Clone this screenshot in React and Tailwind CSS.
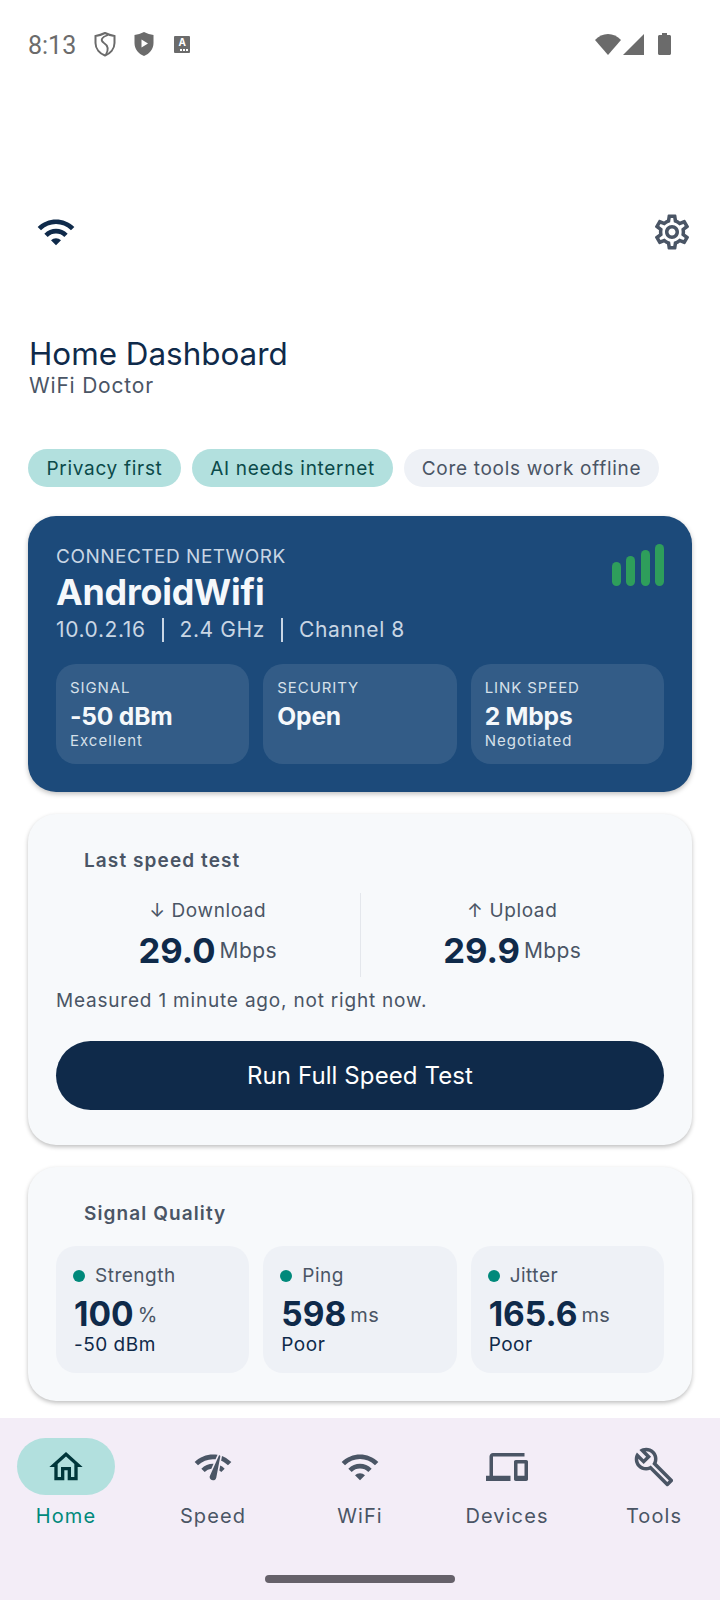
import React from "react";
import {
  MdOutlineHome,
  MdNetworkCheck,
  MdWifi,
  MdDevices,
  MdOutlineBuild,
  MdOutlineSettings,
} from "react-icons/md";

const font = { fontFamily: "Inter, sans-serif" };

const ShieldOutline = () => (
  <svg width="24" height="26" viewBox="0 0 24 26" fill="none" stroke="#6b6b6b" strokeWidth="2">
    <path d="M12 2 C15 3.5 18 4.5 21.5 5 V12 C21.5 18 17 22.5 12 24.5 C7 22.5 2.5 18 2.5 12 V5 C6 4.5 9 3.5 12 2 Z" />
    <path d="M15 4 C9 6 6.5 9 11 12 C15 14.5 16 18 13 23.5" strokeWidth="1.8" />
  </svg>
);

const ShieldPlay = () => (
  <svg width="24" height="26" viewBox="0 0 24 26">
    <path fill="#6b6b6b" d="M12 1 C15 2.5 18.5 3.5 21.5 4 V12 C21.5 18 17.5 23 12 25 C6.5 23 2.5 18 2.5 12 V4 C5.5 3.5 9 2.5 12 1 Z" />
    <path fill="#ffffff" d="M9.5 8.5 L16 12.5 L9.5 16.5 Z" />
  </svg>
);

const Tile = ({ label, value, note }) => (
  <div className="bg-white/10 rounded-[20px] h-[100px] pl-[14px] pt-[15px]">
    <p className="text-[15px] leading-[18px] tracking-[0.9px] text-[#d6e0ea]">{label}</p>
    <p className="text-[24.6px] leading-[34px] mt-[2px] font-bold text-[#f5f8fb] -tracking-[0.2px]">{value}</p>
    {note && <p className="text-[15px] leading-[16px] tracking-[1px] text-[#d6e0ea]">{note}</p>}
  </div>
);

const Quality = ({ label, value, unit, note }) => (
  <div className="bg-[#eef1f6] rounded-[20px] h-[127px] pl-[17px] pt-[18px]">
    <div className="flex items-center gap-[10px]">
      <span className="w-[12px] h-[12px] rounded-full bg-[#00897b]" />
      <span className="text-[19px] leading-[24px] text-[#4a5565] tracking-[0.5px]">{label}</span>
    </div>
    <div className="flex items-center gap-[4px] mt-[6px] pl-[1px]">
      <span className="text-[33.5px] leading-[40px] font-bold text-[#0f2a4a]">{value}</span>
      <span className="text-[20px] leading-[24px] mt-[2px] text-[#4a5565] tracking-[0.3px]">{unit}</span>
    </div>
    <p className="text-[19px] leading-[24px] -mt-[1px] text-[#0f2a4a] pl-[1px] tracking-[0.5px]">{note}</p>
  </div>
);

const Speed = ({ arrow, label, value }) => (
  <div className="flex-1 flex flex-col items-center">
    <p className="text-[19px] leading-[24px] text-[#4a5565] tracking-[0.6px] mt-[6px]">
      {arrow} {label}
    </p>
    <div className="flex items-center gap-[4px] mt-[5px]">
      <span className="text-[34.6px] leading-[44px] font-bold text-[#0f2a4a]">{value}</span>
      <span className="text-[21px] leading-[28px] mt-[2px] text-[#4a5565] tracking-[0.4px]">Mbps</span>
    </div>
  </div>
);

const NavItem = ({ icon: Icon, label, active, size = 40 }) => (
  <div className="w-[147px] shrink-0 flex flex-col items-center">
    <div className={`w-[98px] h-[57px] rounded-full flex items-center justify-center ${active ? "bg-[#b2e0de]" : ""}`}>
      <Icon size={size} color={active ? "#00363a" : "#4a5565"} />
    </div>
    <span className={`text-[20px] leading-[28px] tracking-[1.1px] mt-[7px] ${active ? "text-[#00897b]" : "text-[#4a5565]"}`}>
      {label}
    </span>
  </div>
);

export default function App() {
  return (
    <div className="w-[720px] h-[1600px] bg-white flex flex-col overflow-hidden" style={font}>
      {/* status bar */}
      <div className="h-[88px] flex items-center justify-between pl-[28px] pr-[49px]">
        <div className="flex items-center">
          <span className="text-[25px] leading-[30px] pt-[4px] text-[#6b6b6b] mr-[17px]" style={{ fontFamily: "Roboto, sans-serif" }}>8:13</span>
          <ShieldOutline />
          <span className="w-[15px]" />
          <ShieldPlay />
          <span className="w-[18px]" />
          <div className="w-[16px] h-[17px] bg-[#6b6b6b] rounded-[1px] flex flex-col items-center relative">
            <span className="text-[10px] leading-[12px] font-bold text-white">A</span>
            <span className="absolute bottom-[2px] right-[2px] w-[8px] h-[2px] border-b-2 border-dotted border-white" />
          </div>
        </div>
        <div className="flex items-center">
          <svg width="26" height="21" viewBox="0 0 26 21" className="mr-[2px]">
            <path fill="#6b6b6b" d="M0 6 C7 -2 19 -2 26 6 L13 21 Z" />
          </svg>
          <svg width="21" height="21" viewBox="0 0 21 21" className="mr-[14px]">
            <path fill="#6b6b6b" d="M21 0 V21 H0 Z" />
          </svg>
          <svg width="13" height="22" viewBox="0 0 13 22">
            <path fill="#6b6b6b" d="M4 0 H9 V2 H11.5 C12.3 2 13 2.7 13 3.5 V20.5 C13 21.3 12.3 22 11.5 22 H1.5 C0.7 22 0 21.3 0 20.5 V3.5 C0 2.7 0.7 2 1.5 2 H4 Z" />
          </svg>
        </div>
      </div>

      {/* top bar */}
      <div className="h-[60px] mt-[114px] flex items-center justify-between pl-[36px] pr-[27px]">
        <MdWifi size={40} color="#0f2a4a" />
        <MdOutlineSettings size={42} color="#4a5565" />
      </div>

      <div className="px-[28px] flex flex-col mt-[72px]">
        <h1 className="text-[31.4px] leading-[40px] pl-px text-[#0f2a4a]">Home Dashboard</h1>
        <p className="text-[21px] leading-[24px] pl-px text-[#4a5565] tracking-[0.8px]">WiFi Doctor</p>

        <div className="flex gap-[11px] mt-[51px]">
          <span className="h-[38px] w-[153px] pt-[2px] rounded-full bg-[#b2e0de] text-[#0b4a4a] text-[19px] tracking-[0.7px] flex items-center justify-center">Privacy first</span>
          <span className="h-[38px] w-[201px] pt-[2px] rounded-full bg-[#b2e0de] text-[#0b4a4a] text-[19px] tracking-[0.7px] flex items-center justify-center">AI needs internet</span>
          <span className="h-[38px] w-[255px] pt-[2px] rounded-full bg-[#eef1f6] text-[#4a5565] text-[19px] tracking-[0.7px] flex items-center justify-center">Core tools work offline</span>
        </div>

        {/* network card */}
        <div className="mt-[29px] h-[276px] rounded-[28px] bg-[#1c4a7a] shadow-[0_2px_5px_rgba(0,0,0,0.25)] px-[28px] pt-[29px] relative">
          <p className="text-[19px] leading-[24px] tracking-[0.5px] text-[#c9d6e4]">CONNECTED NETWORK</p>
          <p className="text-[35.8px] leading-[44px] font-bold text-[#f5f8fb] -tracking-[0.2px] mt-[1px]">AndroidWifi</p>
          <div className="flex items-center text-[21px] leading-[28px] text-[#c9d6e4] mt-[2px] tracking-[0.6px]">
            <span>10.0.2.16</span>
            <span className="w-[2px] h-[24px] bg-[#c9d6e4] mx-[16px]" />
            <span>2.4 GHz</span>
            <span className="w-[2px] h-[24px] bg-[#c9d6e4] mx-[16px]" />
            <span>Channel 8</span>
          </div>
          <div className="absolute right-[28px] top-[28px] flex items-end gap-[5.5px]">
            <span className="w-[9px] h-[24px] rounded-full bg-[#2e9e5b]" />
            <span className="w-[9px] h-[30px] rounded-full bg-[#2e9e5b]" />
            <span className="w-[9px] h-[36px] rounded-full bg-[#2e9e5b]" />
            <span className="w-[9px] h-[42px] rounded-full bg-[#2e9e5b]" />
          </div>
          <div className="grid grid-cols-3 gap-[14px] mt-[20px]">
            <Tile label="SIGNAL" value="-50 dBm" note="Excellent" />
            <Tile label="SECURITY" value="Open" />
            <Tile label="LINK SPEED" value="2 Mbps" note="Negotiated" />
          </div>
        </div>

        {/* speed test card */}
        <div className="mt-[22px] h-[331px] rounded-[28px] bg-[#f7f9fb] shadow-[0_2px_4px_rgba(0,0,0,0.25)] px-[28px] pt-[35px]">
          <p className="text-[19px] leading-[24px] font-semibold text-[#4a5565] tracking-[1.1px] pl-[28px]">Last speed test</p>
          <div className="flex mt-[20px] h-[84px]">
            <Speed arrow="↓" label="Download" value="29.0" />
            <div className="w-px bg-[#e4e7ec]" />
            <Speed arrow="↑" label="Upload" value="29.9" />
          </div>
          <p className="text-[19px] leading-[24px] text-[#4a5565] tracking-[0.8px] mt-[12px]">Measured 1 minute ago, not right now.</p>
          <button className="mt-[28px] w-full h-[69px] rounded-full bg-[#0f2a4a] text-white text-[24px] tracking-[0.1px]">Run Full Speed Test</button>
        </div>

        {/* signal card */}
        <div className="mt-[22px] h-[234px] rounded-[28px] bg-[#f7f9fb] shadow-[0_2px_4px_rgba(0,0,0,0.25)] px-[28px] pt-[35px]">
          <p className="text-[19px] leading-[24px] font-semibold text-[#4a5565] tracking-[1.1px] pl-[28px]">Signal Quality</p>
          <div className="grid grid-cols-3 gap-[14px] mt-[20px]">
            <Quality label="Strength" value="100" unit="%" note="-50 dBm" />
            <Quality label="Ping" value="598" unit="ms" note="Poor" />
            <Quality label="Jitter" value="165.6" unit="ms" note="Poor" />
          </div>
        </div>
      </div>

      {/* bottom nav */}
      <div className="mt-auto h-[182px] bg-[#f3edf7] flex flex-col">
        <div className="flex justify-center pt-[20px]">
          <NavItem icon={MdOutlineHome} label="Home" active />
          <NavItem icon={MdNetworkCheck} label="Speed" />
          <NavItem icon={MdWifi} label="WiFi" />
          <NavItem icon={MdDevices} label="Devices" size={42} />
          <NavItem icon={MdOutlineBuild} label="Tools" size={42} />
        </div>
        <div className="mt-auto mb-[17px] mx-auto w-[190px] h-[8px] rounded-full bg-[#65616a]" />
      </div>
    </div>
  );
}
